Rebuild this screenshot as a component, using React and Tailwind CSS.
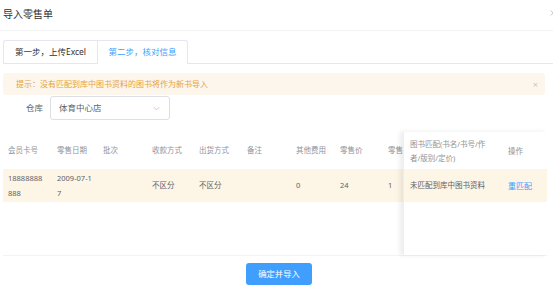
import React from "react";

const FONT = "font-['Noto_Sans','Noto_Sans_CJK_SC',sans-serif]";

const COLS = [
  { title: "会员卡号", w: "w-[49px]" },
  { title: "零售日期", w: "w-[46px]" },
  { title: "批次", w: "w-[49px]" },
  { title: "收款方式", w: "w-[47px]" },
  { title: "出货方式", w: "w-[48px]" },
  { title: "备注", w: "w-[49px]" },
  { title: "其他费用", w: "w-[44px]" },
  { title: "零售价", w: "w-[48px]" },
  { title: "零售数量", w: "w-[60px]" },
];

const ROW = [
  "18888888888",
  "2009-07-17",
  "",
  "不区分",
  "不区分",
  "",
  "0",
  "24",
  "1",
];

const Chevron = ({ className, dir = "down" }) => (
  <svg viewBox="0 0 10 10" className={className} fill="none" stroke="currentColor" strokeWidth="1">
    {dir === "down" ? <path d="M2 3.5 L5 6.5 L8 3.5" /> : <path d="M3.5 2 L6.5 5 L3.5 8" />}
  </svg>
);

export default function App() {
  return (
    <div className={`w-[553px] h-[290px] bg-white overflow-hidden flex flex-col ${FONT}`}>
      {/* header */}
      <div className="h-[31px] shrink-0 flex items-center justify-between border-b border-[#f2f3f5] pl-[3px]">
        <span className="text-[10px] text-[#303133] leading-none mt-[-3px]">导入零售单</span>
        <Chevron dir="right" className="w-[8px] h-[8px] text-[#b0b3b8] mr-[-3px] mt-[-5px]" />
      </div>

      <div className="pl-[3px] pr-[8px] pt-[9px] shrink-0">
        {/* tabs */}
        <div className="flex h-[24px]">
          <div className="w-[94px] h-full border-l border-t border-b border-[#e4e7ed] rounded-tl-[3px] flex items-center justify-center text-[8.5px] text-[#303133]">
            第一步，上传Excel
          </div>
          <div className="w-[91px] h-full border-l border-t border-r border-[#e4e7ed] rounded-tr-[3px] flex items-center justify-center text-[8.5px] text-[#409eff]">
            第二步，核对信息
          </div>
          <div className="flex-1 border-b border-[#e4e7ed] mr-[-8px]" />
        </div>

        {/* alert */}
        <div className="mt-[9px] h-[22px] rounded-[3px] bg-[#fdf6ec] flex items-center justify-between pl-[13px] pr-[7px]">
          <span className="text-[8px] text-[#e6a23c]">提示：没有匹配到库中图书资料的图书将作为新书导入</span>
          <span className="text-[9px] text-[#c8c9cc] leading-none">×</span>
        </div>

        {/* warehouse */}
        <div className="mt-[1px] h-[24px] flex items-center">
          <span className="w-[40px] text-right text-[8.5px] text-[#606266]">仓库</span>
          <div className="ml-[7px] w-[120px] h-full border border-[#dcdfe6] rounded-[3px] flex items-center justify-between pl-[8px] pr-[8px]">
            <span className="text-[8.5px] text-[#606266]">体育中心店</span>
            <Chevron className="w-[9px] h-[9px] text-[#c0c4cc]" />
          </div>
        </div>
      </div>

      {/* table */}
      <div className="mt-[12px] ml-[3px] w-[544px] h-[124px] shrink-0 flex border-b border-[#f2f3f5] text-[7.5px]">
        <div className="w-[400px] overflow-hidden">
          <div className="flex w-max h-[37px] items-center text-[#909399]">
            {COLS.map((c) => (
              <div key={c.title} className={`${c.w} shrink-0 pl-[5px] whitespace-nowrap`}>
                {c.title}
              </div>
            ))}
          </div>
          <div className="flex w-max h-[33px] items-center bg-[#fdf5e6] text-[#606266] leading-[15px]">
            {COLS.map((c, i) => (
              <div key={c.title} className={`${c.w} shrink-0 pl-[5px] h-full flex items-center`}>
                <div className="w-[36px] break-all">{ROW[i]}</div>
              </div>
            ))}
          </div>
        </div>
        <div className="w-[144px] shadow-[-3px_0_5px_rgba(0,0,0,0.08)] border-l border-[#ebeef5]">
          <div className="flex h-[37px] items-center text-[#909399] leading-[14px]">
            <div className="w-[98px] pl-[6px] whitespace-nowrap">
              图书匹配(书名/书号/作
              <br />
              者/版别/定价)
            </div>
            <div className="pl-[6px]">操作</div>
          </div>
          <div className="flex h-[33px] items-center bg-[#fdf5e6] text-[#606266]">
            <div className="w-[98px] pl-[6px] whitespace-nowrap">未匹配到库中图书资料</div>
            <div className="pl-[6px] text-[#409eff] text-[8px]">重匹配</div>
          </div>
        </div>
      </div>

      {/* footer */}
      <div className="flex justify-center pt-[7px] pl-[5px]">
        <button className="w-[66px] h-[22px] rounded-[3px] bg-[#409eff] text-white text-[8.3px] flex items-center justify-center">
          确定并导入
        </button>
      </div>
    </div>
  );
}
